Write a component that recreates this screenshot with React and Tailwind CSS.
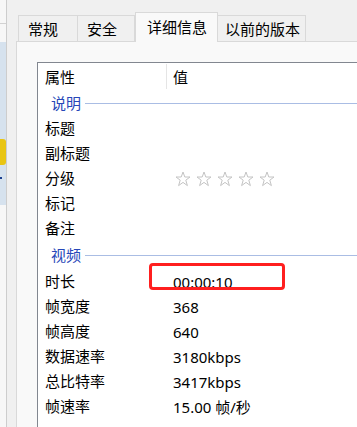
const font = { fontFamily: '"Noto Sans", "Noto Sans CJK SC", sans-serif' }

const Star = () => (
  <svg width="16" height="16" viewBox="0 0 16 16">
    <polygon
      points="8,1 9.8,6 15,6 10.8,9.2 12.4,14.6 8,11.4 3.6,14.6 5.2,9.2 1,6 6.2,6"
      fill="none"
      stroke="#c4c4c4"
      strokeWidth="1"
      strokeLinejoin="miter"
    />
  </svg>
)

const Row = ({ label, children }) => (
  <div className="flex items-center h-[25px] text-[15px] text-black">
    <div className="w-[128px] pl-[7px] shrink-0">{label}</div>
    <div className="pl-[7px] pt-[2px] flex items-center">{children}</div>
  </div>
)

const Group = ({ label, h }) => (
  <div className={`flex items-center pl-[13px] text-[15px] text-[#2747b8] ${h}`}>
    <span>{label}</span>
    <div className="flex-1 h-px bg-[#aabde4] ml-[4px]" />
  </div>
)

const tabs = [
  { label: "常规", w: "w-[60px]", pl: "pl-[9px]" },
  { label: "安全", w: "w-[58px]", pl: "pl-[9px]" },
  { label: "详细信息", w: "w-[83px]", pl: "pl-[11px]", active: true },
  { label: "以前的版本", w: "w-[89px]", pl: "pl-[7px]" },
]

export default function App() {
  return (
    <div className="relative w-[357px] h-[427px] overflow-hidden bg-[#f0f0f0] flex" style={font}>
      {/* left strip of the window behind */}
      <div className="w-[7px] shrink-0 flex flex-col border-r border-[#cdcdcd] bg-[#f7f7f7]">
        <div className="h-[24px] border-b border-[#d2d2d2]" />
        <div className="h-[18px]" />
        <div className="h-[163px] bg-[#d6e2ee] flex flex-col">
          <div className="h-[97px]" />
          <div className="h-[26px] w-[6px] bg-[#e9c513] rounded-r-[3px]" />
          <div className="h-[12px]" />
          <div className="w-[2px] h-[2px] bg-[#1b3f8f]" />
        </div>
      </div>

      <div className="flex-1 flex flex-col pt-[12px] pl-[9px]">
        {/* tabs */}
        <div className="flex items-end h-[29px] pl-[2px] relative z-10">
          {tabs.map((t) =>
            t.active ? (
              <div
                key={t.label}
                className={`${t.w} ${t.pl} h-[30px] -mb-px flex items-center bg-[#f9f9f9] border border-b-0 border-[#d9d9d9] text-[15px] text-black`}
              >
                {t.label}
              </div>
            ) : (
              <div
                key={t.label}
                className={`${t.w} ${t.pl} h-[26px] flex items-center pt-[1px] bg-[#f0f0f0] border border-b-0 border-[#d9d9d9] -ml-px first:ml-0 text-[15px] text-black`}
              >
                {t.label}
              </div>
            )
          )}
        </div>

        {/* panel */}
        <div className="flex-1 border-t border-l border-[#d9d9d9] bg-[#f9f9f9] pt-[20px] pl-[20px]">
          <div className="h-full border-t border-l border-[#828790] bg-white">
            <div className="flex h-[27px] text-[15px] text-black">
              <div className="w-[128px] pl-[7px] flex items-center pt-[2px]">属性</div>
              <div className="border-l border-[#e5e5e5] my-[1px] pl-[6px] flex items-center pt-[1px]">值</div>
            </div>
            <Group label="说明" h="h-[26px]" />
            <Row label="标题" />
            <Row label="副标题" />
            <Row label="分级">
              <div className="flex gap-[5px] ml-[2px] -mt-[2px]">
                <Star />
                <Star />
                <Star />
                <Star />
                <Star />
              </div>
            </Row>
            <Row label="标记" />
            <Row label="备注" />
            <Group label="视频" h="h-[28px]" />
            <Row label="时长">00:00:10</Row>
            <Row label="帧宽度">368</Row>
            <Row label="帧高度">640</Row>
            <Row label="数据速率">3180kbps</Row>
            <Row label="总比特率">3417kbps</Row>
            <Row label="帧速率">15.00 帧/秒</Row>
          </div>
        </div>
      </div>

      {/* red annotation box */}
      <div className="absolute left-[149px] top-[263px] w-[136px] h-[27px] border-[3px] border-[#ff1f1f] rounded-[4px]" />
    </div>
  )
}
